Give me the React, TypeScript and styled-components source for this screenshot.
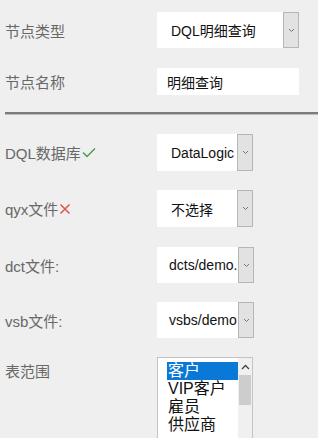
import React from "react";
import styled, { createGlobalStyle } from "styled-components";

const GlobalStyle = createGlobalStyle`
  html, body {
    margin: 0;
    padding: 0;
    background: #efefef;
    overflow: hidden;
  }
  body {
    font-family: "Liberation Sans", "Noto Sans CJK SC", sans-serif;
  }
`;

const Panel = styled.div`
  padding: 12px 0 0 5px;
  height: 438px;
  box-sizing: border-box;
  overflow: hidden;
`;

const Row = styled.div<{ $gap: number; $top?: boolean }>`
  display: flex;
  align-items: ${({ $top }) => ($top ? "flex-start" : "center")};
  margin-bottom: ${({ $gap }) => $gap}px;
`;

const Label = styled.div<{ $top?: boolean }>`
  width: 152px;
  flex-shrink: 0;
  font-size: 15px;
  color: #686868;
  display: flex;
  align-items: center;
  gap: 1px;
  margin-top: ${({ $top }) => ($top ? "3px" : "0")};
`;

const SelectBox = styled.div<{ $height: number }>`
  display: flex;
  height: ${({ $height }) => $height}px;
`;

const Field = styled.div<{ $width: number; $pad: number }>`
  width: ${({ $width }) => $width}px;
  background: #fff;
  padding-left: ${({ $pad }) => $pad}px;
  box-sizing: border-box;
  display: flex;
  align-items: center;
  font-size: 14px;
  color: #111;
  white-space: nowrap;
  overflow: hidden;
`;

const DropButton = styled.div`
  width: 16px;
  box-sizing: border-box;
  background: #e2e2e2;
  border: 1px solid #b6b6b6;
  display: flex;
  align-items: center;
  justify-content: center;
`;

const TextInput = styled.div`
  width: 142px;
  height: 27px;
  background: #fff;
  padding-left: 10px;
  box-sizing: border-box;
  display: flex;
  align-items: center;
  font-size: 14px;
  color: #111;
`;

const Divider = styled.div`
  height: 2px;
  background: #7c7c7c;
  border-bottom: 1px solid #bdbdbd;
  margin: 17px 0 19px;
`;

const ListBox = styled.div`
  width: 96px;
  height: 100px;
  border: 1px solid #c4c4c4;
  background: #fff;
  display: flex;
  box-sizing: border-box;
`;

const ListItems = styled.div`
  flex: 1;
  padding: 4px 0 0 9px;
`;

const ListItem = styled.div<{ $selected?: boolean }>`
  font-size: 16px;
  line-height: 18px;
  height: 18px;
  padding-left: 1px;
  color: ${({ $selected }) => ($selected ? "#fff" : "#111")};
  background: ${({ $selected }) => ($selected ? "#0a78d7" : "transparent")};
  white-space: nowrap;
`;

const ScrollTrack = styled.div`
  width: 14px;
  background: #f0f0f0;
  display: flex;
  flex-direction: column;
  align-items: center;
`;

const ScrollArrow = styled.div`
  height: 17px;
  width: 100%;
  display: flex;
  align-items: center;
  justify-content: center;
`;

const ScrollThumb = styled.div`
  width: 12px;
  height: 30px;
  background: #cdcdcd;
`;

const Chevron = () => (
  <svg width="7" height="5" viewBox="0 0 7 5">
    <polyline points="1,1 3.5,3.5 6,1" fill="none" stroke="#777" strokeWidth="1" />
  </svg>
);

const UpChevron = () => (
  <svg width="9" height="6" viewBox="0 0 9 6">
    <polyline points="1,5 4.5,1.5 8,5" fill="none" stroke="#444" strokeWidth="1.3" />
  </svg>
);

const Check = () => (
  <svg width="14" height="11" viewBox="0 0 14 11">
    <polyline points="1,5.5 5,9.5 13,1.5" fill="none" stroke="#4f9b4f" strokeWidth="1.4" />
  </svg>
);

const Cross = () => (
  <svg width="12" height="12" viewBox="0 0 12 12">
    <path d="M1.5 1.5 L10.5 10.5 M10.5 1.5 L1.5 10.5" stroke="#e2524f" strokeWidth="1.5" />
  </svg>
);

const Select: React.FC<{ value: string; width: number; height?: number; pad?: number }> = ({
  value,
  width,
  height = 37,
  pad = 14,
}) => (
  <SelectBox $height={height}>
    <Field $width={width} $pad={pad}>
      {value}
    </Field>
    <DropButton>
      <Chevron />
    </DropButton>
  </SelectBox>
);

const tables = ["客户", "VIP客户", "雇员", "供应商"];

const App: React.FC = () => {
  return (
    <>
      <GlobalStyle />
      <Panel>
        <Row $gap={20}>
          <Label>节点类型</Label>
          <Select value="DQL明细查询" width={126} height={36} />
        </Row>
        <Row $gap={0}>
          <Label>节点名称</Label>
          <TextInput>明细查询</TextInput>
        </Row>

        <Divider />

        <Row $gap={19}>
          <Label>
            DQL数据库
            <Check />
          </Label>
          <Select value="DataLogic" width={80} />
        </Row>
        <Row $gap={20}>
          <Label>
            qyx文件
            <Cross />
          </Label>
          <Select value="不选择" width={80} />
        </Row>
        <Row $gap={19}>
          <Label>dct文件:</Label>
          <Select value="dcts/demo." width={81} height={36} pad={12} />
        </Row>
        <Row $gap={19}>
          <Label>vsb文件:</Label>
          <Select value="vsbs/demo" width={81} height={36} pad={12} />
        </Row>
        <Row $gap={0} $top>
          <Label $top>表范围</Label>
          <ListBox>
            <ListItems>
              {tables.map((t, i) => (
                <ListItem key={t} $selected={i === 0}>
                  {t}
                </ListItem>
              ))}
            </ListItems>
            <ScrollTrack>
              <ScrollArrow>
                <UpChevron />
              </ScrollArrow>
              <ScrollThumb />
            </ScrollTrack>
          </ListBox>
        </Row>
      </Panel>
    </>
  );
};

export default App;
